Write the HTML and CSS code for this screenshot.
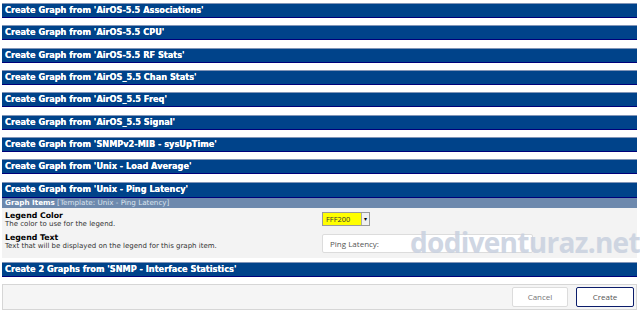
FILE: index.html
```html
<!DOCTYPE html>
<html lang="en">
<head>
  <meta charset="UTF-8" />
  <title>Create New Graphs</title>
  <link rel="stylesheet" href="styles.css">
</head>
<body>
  <div class="page">
    <div class="bar">Create Graph from 'AirOS-5.5 Associations'</div>
    <div class="bar">Create Graph from 'AirOS-5.5 CPU'</div>
    <div class="bar">Create Graph from 'AirOS-5.5 RF Stats'</div>
    <div class="bar">Create Graph from 'AirOS_5.5 Chan Stats'</div>
    <div class="bar">Create Graph from 'AirOS_5.5 Freq'</div>
    <div class="bar">Create Graph from 'AirOS_5.5 Signal'</div>
    <div class="bar">Create Graph from 'SNMPv2-MIB - sysUpTime'</div>
    <div class="bar">Create Graph from 'Unix - Load Average'</div>

    <div class="section">
      <div class="bar open">Create Graph from 'Unix - Ping Latency'</div>
      <div class="subbar"><b>Graph Items</b> [Template: Unix - Ping Latency]</div>
      <div class="fields">
        <div class="field">
          <div class="label">
            <b>Legend Color</b>
            <span>The color to use for the legend.</span>
          </div>
          <div class="select">
            <span class="swatch">FFF200</span>
            <span class="arrow">&#9662;</span>
          </div>
        </div>
        <div class="field">
          <div class="label">
            <b>Legend Text</b>
            <span>Text that will be displayed on the legend for this graph item.</span>
          </div>
          <input class="text" type="text" value="Ping Latency:">
        </div>
        <div class="watermark">dodiventuraz.net</div>
      </div>
    </div>

    <div class="bar">Create 2 Graphs from 'SNMP - Interface Statistics'</div>

    <div class="footer">
      <button class="btn">Cancel</button>
      <button class="btn primary">Create</button>
    </div>
  </div>
</body>
</html>
```

FILE: styles.css
```css
body {
  margin: 0;
  background: #fff;
  font-family: "DejaVu Sans", Verdana, sans-serif;
}
.page {
  padding: 3px 3px 0 2px;
}
.bar {
  height: 13px;
  line-height: 13px;
  background: #00438a;
  border-top: 1px solid #8195b8;
  border-bottom: 1px solid #00007a;
  color: #fff;
  font-weight: bold;
  font-size: 8.2px;
  padding-left: 3px;
  margin-bottom: 7.33px;
  white-space: nowrap;
  text-shadow: 0 0 0.4px #fff;
}
.section {
  margin-bottom: 4px;
}
.section .bar.open {
  margin-bottom: 0;
  height: 14px;
}
.subbar {
  height: 10px;
  line-height: 10px;
  background: #6d89ad;
  color: #dbe3ee;
  font-size: 7.2px;
  padding-left: 3px;
}
.subbar b {
  color: #fff;
}
.fields {
  position: relative;
  background: #f3f3f3;
  padding: 3px 3px 5px 3px;
  height: 42px;
}
.field {
  display: flex;
  align-items: flex-start;
  margin-bottom: 4px;
}
.label {
  width: 317px;
  display: flex;
  flex-direction: column;
  font-size: 7px;
  color: #333;
  line-height: 9px;
}
.label b {
  color: #000;
  font-size: 7.8px;
}
.select {
  display: flex;
  height: 12px;
  border: 1px solid #9a9a9a;
  background: #ffff00;
  margin-top: 1px;
}
.swatch {
  width: 35px;
  font-size: 7.4px;
  line-height: 12px;
  padding-left: 3px;
  color: #333;
  font-family: "Open Sans", sans-serif;
}
.arrow {
  width: 7px;
  background: #f0f0f0;
  border-left: 1px solid #aaa;
  font-size: 6px;
  line-height: 12px;
  text-align: center;
  color: #000;
}
.text {
  box-sizing: border-box;
  width: 211px;
  height: 19px;
  margin: 1px 0 0 0;
  padding: 0 7px;
  border: 1px solid #dcdcdc;
  border-radius: 2px;
  background: #fff;
  font-family: "Open Sans", sans-serif;
  font-size: 8px;
  line-height: 17px;
  color: #555;
}
.watermark {
  position: absolute;
  left: 408px;
  top: 20px;
  font-family: "Open Sans", sans-serif;
  font-weight: 700;
  font-size: 28px;
  line-height: 28px;
  letter-spacing: -0.7px;
  color: #cad2e0;
  opacity: 0.9;
  pointer-events: none;
}
.footer {
  margin-top: 3px;
  height: 24px;
  border: 1px solid #d6d6d6;
  background: #f5f5f5;
  display: flex;
  justify-content: flex-end;
  align-items: center;
  gap: 8px;
  padding-right: 2px;
}
.btn {
  height: 20px;
  width: 56px;
  border: 1px solid #dcdcdc;
  border-radius: 2px;
  background: #fff;
  font-family: "Open Sans", sans-serif;
  font-size: 8px;
  color: #777;
}
.btn.primary {
  width: 58px;
  border: 1px solid #0b1d6b;
  color: #555;
}
```
